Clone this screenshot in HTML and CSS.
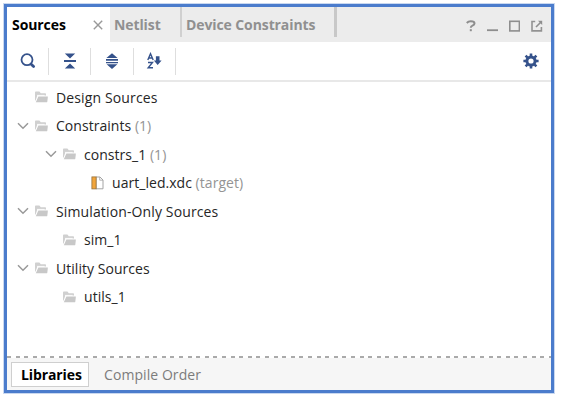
FILE: index.html
```html
<!DOCTYPE html>
<html lang="en">
<head>
<meta charset="utf-8">
<title>Sources</title>
<link rel="stylesheet" href="styles.css">
</head>
<body>
<svg class="defs" width="0" height="0">
  <symbol id="folder" viewBox="0 0 14 12">
    <path d="M0 9.6V1.4Q0 .6.8.6H4.4L5.8 2.2H10.2Q11 2.2 11 3V4.6H3.2Q2.4 4.6 2 5.4L.6 9.6Z" fill="#d0d0d0"/>
    <path d="M2 4.4H9.6" stroke="#fff" stroke-width=".9"/>
    <path d="M3.4 5.6H12.9L12.3 10.8Q12.2 11.3 11.6 11.3H.8Z" fill="#c8c8c8"/>
  </symbol>
  <symbol id="chevron" viewBox="0 0 12 8">
    <path d="M1 1.3L6 6.2L11 1.3" fill="none" stroke="#999" stroke-width="1.5"/>
  </symbol>
</svg>
<main class="panel">
  <header class="tabs">
    <div class="tab active"><span class="t-sources">Sources</span>
      <svg class="close" width="10" height="10" viewBox="0 0 10 10"><path d="M.8.8L9.2 9.2M9.2.8L.8 9.2" fill="none" stroke="#999" stroke-width="1.4"/></svg>
    </div>
    <div class="tab netlist"><span class="t-netlist">Netlist</span></div>
    <div class="tab device"><span class="t-device">Device Constraints</span></div>
    <div class="window-tools">
      <svg width="10" height="12" viewBox="0 0 10 12"><path d="M.8 3Q2.3 1.2 4.8 1.2Q8.5 1.2 8.5 3.5Q8.5 4.8 6.5 5.6Q4.8 6.3 4.8 7.8" fill="none" stroke="#8e8e8e" stroke-width="2"/><path d="M3.8 9.2H5.8V11.2H3.8Z" fill="#8e8e8e"/></svg>
      <svg width="11" height="12" viewBox="0 0 11 12"><path d="M0 10.2H11" stroke="#8e8e8e" stroke-width="1.8"/></svg>
      <svg width="11" height="12" viewBox="0 0 11 12"><rect x=".8" y="1.3" width="9.6" height="9.6" fill="none" stroke="#8e8e8e" stroke-width="1.6"/></svg>
      <svg width="12" height="12" viewBox="0 0 12 12"><path d="M4.2 1.5H1V10.9H10.4V7" fill="none" stroke="#929292" stroke-width="1.6"/><path d="M5 7L9.5 2.5" stroke="#8e8e8e" stroke-width="1.6"/><path d="M7 .7H11.2V4.9Z" fill="#8e8e8e"/></svg>
    </div>
  </header>
  <div class="toolbar">
    <div class="tool"><svg width="18" height="18" viewBox="0 0 18 18"><circle cx="8" cy="7.7" r="5.5" fill="none" stroke="#35528b" stroke-width="1.8"/><path d="M12.2 12.2L14.6 14.6" stroke="#35528b" stroke-width="2.8" stroke-linecap="round"/></svg></div>
    <div class="tool"><svg width="18" height="18" viewBox="0 0 18 18"><path d="M3.8 1.4H14.2L9 6.4ZM3 8.1H15V10H3ZM3.8 16.5L9 11.5L14.2 16.5Z" fill="#35528b"/></svg></div>
    <div class="tool"><svg width="18" height="18" viewBox="0 0 18 18"><path d="M9 1.2L14.6 6H3.4ZM3 7.1H15V8.8H3ZM3 9.9H15V11.2H3ZM3.6 12.2H14.4L9 17Z" fill="#35528b"/></svg></div>
    <div class="tool"><svg width="18" height="18" viewBox="0 0 18 18"><path d="M2.8 8L5.5 1.7L8.2 8M3.7 6H7.3M3 10.5H7.5L3.2 15.8H8" fill="none" stroke="#35528b" stroke-width="1.4"/><path d="M10.9 4.2H14.5V8.4H16.6L12.7 13L8.8 8.4H10.9Z" fill="#35528b"/></svg></div>
    <svg class="gear" width="18" height="18" viewBox="-9 -9 18 18"><circle r="4.1" fill="none" stroke="#35528b" stroke-width="3"/><path d="M0-7.6V-5M0 5V7.6M-7.6 0H-5M5 0H7.6M-5.4-5.4L-3.7-3.7M3.7 3.7L5.4 5.4M-5.4 5.4L-3.7 3.7M3.7-3.7L5.4-5.4" stroke="#35528b" stroke-width="2.6"/></svg>
  </div>
  <section class="tree">
    <div class="row"><i class="chev"></i><svg class="folder"><use href="#folder"/></svg><span class="wide">Design Sources</span></div>
    <div class="row"><svg class="chev"><use href="#chevron"/></svg><svg class="folder"><use href="#folder"/></svg><span>Constraints <em>(1)</em></span></div>
    <div class="row child"><svg class="chev"><use href="#chevron"/></svg><svg class="folder"><use href="#folder"/></svg><span>constrs_1 <em>(1)</em></span></div>
    <div class="row leaf"><i class="chev"></i><svg class="file" viewBox="0 0 13 14"><path d="M5 1H9L12 4V12.8H5Z" fill="#fff" stroke="#a4a4a4"/><path d="M8.7 1V4.2H12" fill="none" stroke="#a4a4a4" stroke-width=".8"/><rect x=".9" y=".9" width="4.2" height="12" fill="#f2a53a" stroke="#94703c" stroke-width=".8"/></svg><span>uart_led.xdc <em>(target)</em></span></div>
    <div class="row"><svg class="chev"><use href="#chevron"/></svg><svg class="folder"><use href="#folder"/></svg><span class="wide">Simulation-Only Sources</span></div>
    <div class="row child"><i class="chev"></i><svg class="folder"><use href="#folder"/></svg><span>sim_1</span></div>
    <div class="row"><svg class="chev"><use href="#chevron"/></svg><svg class="folder"><use href="#folder"/></svg><span>Utility Sources</span></div>
    <div class="row child"><i class="chev"></i><svg class="folder"><use href="#folder"/></svg><span>utils_1</span></div>
  </section>
  <div class="divider"></div>
  <footer class="views">
    <div class="view selected"><span class="t-lib">Libraries</span></div>
    <div class="view"><span class="t-comp">Compile Order</span></div>
  </footer>
</main>
</body>
</html>
```
FILE: styles.css
```css
* { box-sizing: border-box; }
body { margin: 0; background: #fff; font-family: "Open Sans", "Noto Sans", sans-serif; font-size: 14px; color: #262626; white-space: nowrap; }
svg { display: block; flex: none; }
.defs { position: absolute; }
.panel { width: 550px; height: 389px; margin: 4px; border: 3px solid #4b7ccc; box-shadow: 0 0 0 1px #c9d8f0; display: flex; flex-direction: column; background: #fff; }
.tabs { height: 35px; flex: none; display: flex; background: #ececec; font-weight: 700; color: #909090; }
.tab { height: 35px; display: flex; align-items: center; padding-left: 5px; line-height: 35px; }
.active { width: 103px; background: #fff; color: #000; }
.active span { letter-spacing: -0.08px; }
.close { margin-left: auto; margin-right: 7px; }
.netlist { width: 72px; height: 30px; line-height: 35px; border-right: 2px solid #d0d0d0; padding-left: 4px; }
.device { width: 155px; height: 30px; line-height: 35px; border-right: 3px solid #c8c8c8; padding-left: 4px; }
.netlist span, .device span { height: 30px; letter-spacing: -0.1px; }
.window-tools { margin-left: auto; display: flex; align-items: center; gap: 11px; padding: 3px 8px 0 0; }
.toolbar { height: 40px; flex: none; display: flex; align-items: center; border-bottom: 2px solid #e8e8e8; }
.tool { width: 42.2px; height: 27px; border-right: 1.5px solid #dedede; display: flex; align-items: center; justify-content: center; }
.gear { margin: 0 11.5px 0 auto; }
.tree { flex: 1; padding: 0.8px 0 0 10px; }
.row { height: 28.55px; display: flex; align-items: center; }
.child { padding-left: 28px; }
.leaf { padding-left: 56px; }
.row span { letter-spacing: 0.04px; }
.row .wide { letter-spacing: 0.13px; }
.chev { width: 12px; height: 8px; margin-right: 6px; flex: none; }
.folder { width: 14px; height: 12px; margin-right: 7px; }
.file { width: 13px; height: 14px; margin-right: 8px; }
em { font-style: normal; color: #949494; }
.divider { height: 2px; flex: none; background: repeating-linear-gradient(90deg, #aaa 0 4px, #fff 4px 8.6px); }
.views { height: 32px; flex: none; background: #f6f6f6; display: flex; align-items: center; padding-left: 4px; color: #7c7c7c; }
.view { height: 25px; line-height: 25px; padding-left: 15px; letter-spacing: 0.07px; }
.selected { width: 78px; border: 1px solid #cfcfcf; background: #fff; color: #000; font-weight: 700; padding-left: 9px; line-height: 23px; letter-spacing: -0.1px; }
```
